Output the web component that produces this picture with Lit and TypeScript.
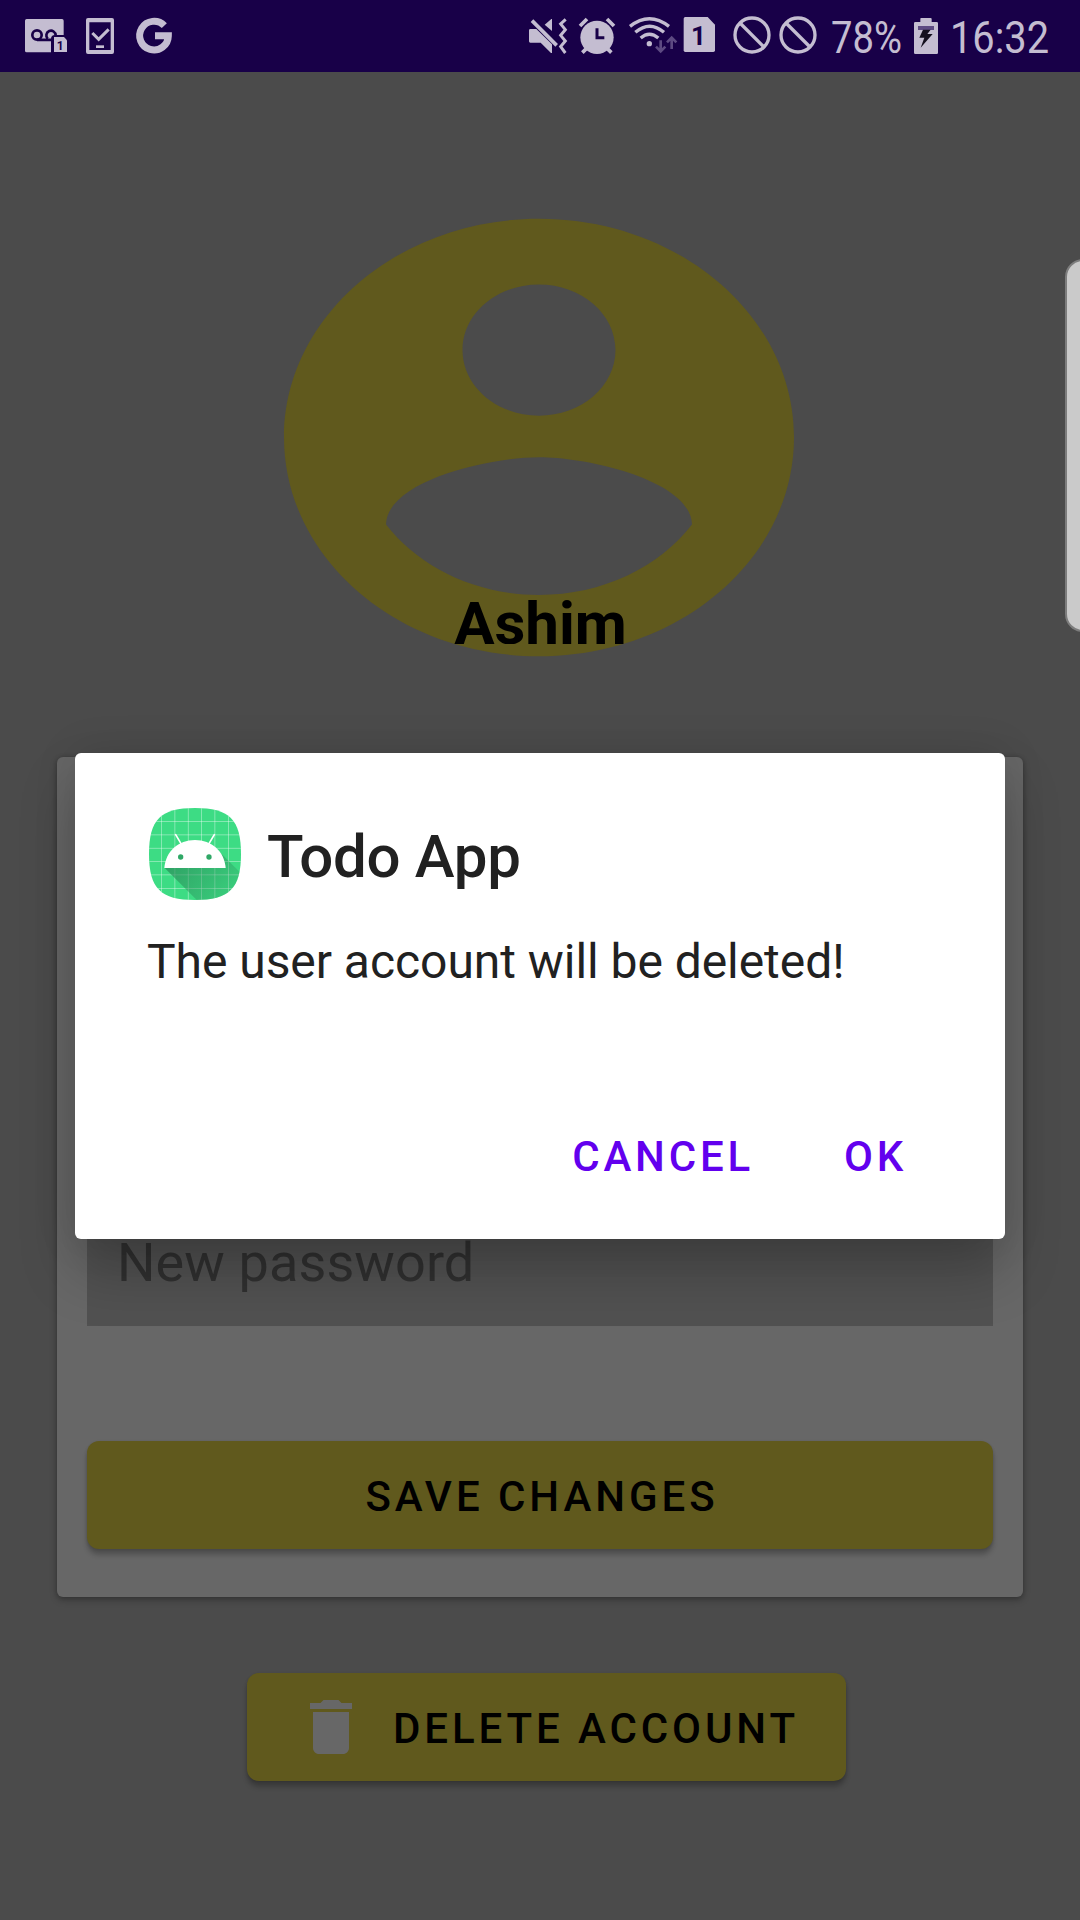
import { LitElement, html, css, svg } from "lit";
import { customElement } from "lit/decorators.js";

@customElement("status-bar")
class StatusBar extends LitElement {
  static styles = css`
    :host {
      display: flex;
      justify-content: space-between;
      height: 72px;
      padding: 0 30px 0 25px;
      background: #180048;
      color: #c4bdd1;
      font-family: Roboto, "Liberation Sans", sans-serif;
    }
    .group { display: flex; }
    svg { display: block; height: 72px; fill: currentColor; flex: none; overflow: visible; }
    .line { fill: none; stroke: currentColor; }
    .cut { fill: none; stroke: #180048; }
    .hole { fill: #180048; }
    .dim { fill: #5d4a82; }
    .dimline { fill: none; stroke: #5d4a82; stroke-width: 8; }
    .phone { margin-left: 18px; }
    .google { margin-left: 23px; }
    .alarm { margin-left: 12px; }
    .wifi { margin-left: 14px; }
    .sim { margin-left: 5px; }
    .ban { margin-left: 17px; }
    .ban2 { margin-left: 8px; }
    .percent { margin-left: 13px; }
    .battery { margin-left: 11px; }
    .time { margin-left: 13px; }
    .digit { font-weight: 700; }
  `;

  private ban(cx: number) {
    return svg`<circle class="line" cx=${cx} cy="105" r="51" stroke-width="10"/>
      <path class="line" stroke-width="10" d="M${cx - 36} 69l72 72"/>`;
  }

  render() {
    return html`
      <div class="group">
        <svg width="43" viewBox="75 0 129 216">
          <path d="M80 57h106q5 0 5 5v43h-26q-12 0-12 12v40H80q-5 0-5-5V62q0-5 5-5z"/>
          <g class="cut" stroke-width="8">
            <circle cx="111" cy="105" r="14"/>
            <path d="M143 116A14 14 0 1 1 167 106M111 119.500h43"/>
          </g>
          <path d="M162 111h30l9 10v35h-39z"/>
          <text class="hole digit" x="170" y="150" font-size="36">1</text>
        </svg>
        <svg class="phone" width="28" viewBox="258 0 84 216">
          <path fill-rule="evenodd" d="M264 54h72q6 0 6 6v96q0 6-6 6h-72q-6 0-6-6V60q0-6 6-6zM268 67v83h64V67z"/>
          <path class="line" stroke-width="9" d="M277 99l19 19 30-30"/>
          <path d="M288 136h24v8h-24z"/>
        </svg>
        <svg class="google" width="35" viewBox="408 0 105 216">
          <path class="line" stroke-width="21" d="M490 77A43 43 0 1 0 502 107.500H462"/>
        </svg>
      </div>
      <div class="group">
        <svg width="38" viewBox="57 0 114 216">
          <path d="M61 87h18l47 46v26h-3l-31-31H61q-4 0-4-4V91q0-4 4-4zM104 74l20-17h2v36z"/>
          <path class="cut" stroke-width="5" d="M72 57l76 75"/>
          <path class="line" stroke-width="11" d="M66 62l74 74"/>
          <path class="line" stroke-width="9" d="M167 58l-15 14 14 17-14 17 14 17-14 17 14 19"/>
        </svg>
        <svg class="alarm" width="36" viewBox="207 0 108 216">
          <circle cx="261" cy="112" r="50"/>
          <path class="line" stroke-width="11" d="M210 78l21-21M291 57l21 21M217 158l15-15M304 158l-15-15"/>
          <path class="cut" stroke-width="9" d="M261 85v28h22"/>
        </svg>
        <svg class="wifi" width="49" viewBox="357 0 147 216">
          <g class="line" stroke-width="10">
            <path d="M360 79q58-46 117 0"/>
            <path d="M376 97q43-37 86 0"/>
            <path d="M392 114q26-23 53 0"/>
          </g>
          <circle cx="418" cy="131" r="8"/>
          <path class="dimline" d="M452 121v30M438 140l14 14 14-14M485 147v-31M471 127l14-14 14 14"/>
        </svg>
        <svg class="sim" width="33" viewBox="519 0 99 216">
          <path d="M526 51h67l22 23v77q0 5-5 5h-84q-5 0-5-5V56q0-5 5-5z"/>
          <text class="hole digit" x="543" y="135" font-size="78">1</text>
        </svg>
        <svg class="ban" width="38" viewBox="669 0 114 216">${this.ban(726)}</svg>
        <svg class="ban2" width="39" viewBox="807 0 117 216">${this.ban(864)}</svg>
        <svg class="percent" width="72" viewBox="0 0 72 72">
          <text x="0" y="53" font-size="45" textLength="71" lengthAdjust="spacingAndGlyphs">78%</text>
        </svg>
        <svg class="battery" width="24" viewBox="342 0 72 216">
          <path d="M362 54h30q3 0 3 3v9h15q4 0 4 4v88q0 4-4 4h-64q-4 0-4-4V70q0-4 4-4h15v-9q0-3 2-3z"/>
          <path class="dim" d="M354 78h48v12h-48z"/>
          <path fill="#15101f" d="M369 89h23l-10 13h16l-36 41 11-30h-15z"/>
        </svg>
        <svg class="time" width="99" viewBox="0 0 99 72">
          <text x="-1" y="53" font-size="45" textLength="99" lengthAdjust="spacingAndGlyphs">16:32</text>
        </svg>
      </div>
    `;
  }
}

@customElement("confirm-dialog")
class ConfirmDialog extends LitElement {
  static styles = css`
    :host {
      display: flex;
      flex-direction: column;
      box-sizing: border-box;
      width: 930px;
      height: 486px;
      padding: 55px 72px 0;
      border-radius: 6px;
      background: #fff;
      color: #212121;
      box-shadow: 0 32px 56px rgba(0, 0, 0, 0.22), 0 0 44px rgba(0, 0, 0, 0.1);
      font-family: Roboto, "Liberation Sans", sans-serif;
    }
    .head { display: flex; height: 92px; padding-left: 2px; }
    .logo { width: 92px; height: 92px; flex: none; }
    .title {
      margin: 0 0 0 26px;
      font-size: 60px;
      font-weight: 500;
      line-height: 98px;
      letter-spacing: -0.3px;
      white-space: nowrap;
    }
    .message { margin: 30px 0 0; font-size: 48px; line-height: 64px; letter-spacing: -0.05px; white-space: nowrap; }
    .actions { display: flex; justify-content: flex-end; gap: 90px; margin-top: 131px; padding-right: 26px; }
    .action {
      padding: 0;
      border: 0;
      background: none;
      color: #6200ee;
      font: 500 42px/64px Roboto, "Liberation Sans", sans-serif;
      letter-spacing: 3.8px;
    }
  `;

  render() {
    return html`
      <div class="head">
        <svg class="logo" viewBox="57 54 276 276">
          <defs>
            <clipPath id="mask">
              <path d="M195 54C298 54 333 89 333 192S298 330 195 330 57 295 57 192 92 54 195 54z"/>
            </clipPath>
            <linearGradient id="shade" gradientUnits="userSpaceOnUse" x1="150" y1="190" x2="310" y2="330">
              <stop offset="0" stop-color="#2a8a58" stop-opacity=".7"/>
              <stop offset="1" stop-color="#2a8a58" stop-opacity=".15"/>
            </linearGradient>
          </defs>
          <g clip-path="url(#mask)">
            <path fill="#3ddc84" d="M57 54h276v276H57z"/>
            <path fill="none" stroke="#fff" stroke-opacity=".45" stroke-width="2.500"
              d="M94.500 54v276M134.500 54v276M175 54v276M214.500 54v276M254.500 54v276M295.500 54v276M57 94.500h276M57 134.500h276M57 175h276M57 214.500h276M57 254.500h276M57 295.500h276"/>
            <path fill="url(#shade)" d="M104 234L205 335H333V250L275 192z"/>
          </g>
          <path fill="#fff" d="M103 234C107 184 145 150 195 150S283 184 287 234z"/>
          <path fill="none" stroke="#fff" stroke-width="5" stroke-linecap="round" d="M137 134l16 27M253 134l-16 27"/>
          <circle cx="152" cy="201" r="8" fill="#2fa866"/>
          <circle cx="237" cy="201" r="8" fill="#2fa866"/>
        </svg>
        <h2 class="title">Todo App</h2>
      </div>
      <p class="message">The user account will be deleted!</p>
      <div class="actions">
        <button class="action">CANCEL</button>
        <button class="action">OK</button>
      </div>
    `;
  }
}

@customElement("app-root")
class AppRoot extends LitElement {
  static styles = css`
    :host {
      display: flex;
      flex-direction: column;
      position: relative;
      width: 1080px;
      height: 1920px;
      overflow: hidden;
      background: #4b4b4b;
      font-family: Roboto, "Liberation Sans", sans-serif;
    }
    .profile {
      display: grid;
      justify-items: center;
      width: 612px;
      height: 525px;
      margin: 103px 0 0 233px;
    }
    .avatar, .name { grid-area: 1 / 1; }
    .avatar { width: 612px; height: 525px; fill: #60591d; }
    .name {
      align-self: end;
      height: 54px;
      margin: 0 0 56px;
      padding-left: 3px;
      overflow: hidden;
      color: #000;
      font-size: 60px;
      font-weight: 700;
      line-height: 68px;
    }
    .card {
      display: flex;
      flex-direction: column;
      justify-content: flex-end;
      box-sizing: border-box;
      width: 966px;
      height: 840px;
      margin: 57px 0 0 57px;
      padding: 0 30px 48px;
      border-radius: 6px;
      background: #676767;
      box-shadow: 0 3px 7px rgba(0, 0, 0, 0.28), 0 0 4px rgba(0, 0, 0, 0.15);
    }
    .field {
      box-sizing: border-box;
      height: 168px;
      margin-bottom: 115px;
      padding: 72px 30px 0;
      background: #515151;
      color: #303030;
      font-size: 54px;
      line-height: 65px;
      letter-spacing: 0.1px;
    }
    .button {
      display: flex;
      align-items: center;
      box-sizing: border-box;
      flex: none;
      height: 108px;
      padding: 0 48px;
      border: 0;
      border-radius: 12px;
      background: #60591d;
      color: #000;
      font: 500 42px/50px Roboto, "Liberation Sans", sans-serif;
      letter-spacing: 3.9px;
      white-space: nowrap;
      box-shadow: 0 6px 5px rgba(0, 0, 0, 0.22), 0 1px 3px rgba(0, 0, 0, 0.15);
    }
    .label { padding-top: 3px; }
    .save { justify-content: center; padding-left: 52px; letter-spacing: 3.95px; }
    .delete { width: 599px; margin: 76px 0 0 247px; gap: 26px; }
    .trash { width: 72px; height: 72px; flex: none; fill: #676767; }
    .dialog { position: absolute; left: 75px; top: 753px; }
    .edge {
      position: absolute;
      left: 1065px;
      top: 259px;
      box-sizing: border-box;
      width: 36px;
      height: 373px;
      border: 2px solid #7d7d7d;
      border-radius: 19px;
      background: #cacaca;
    }
  `;

  render() {
    return html`
      <status-bar></status-bar>
      <section class="profile">
        <svg class="avatar" viewBox="0 0 24 24" preserveAspectRatio="none">
          <path d="M12 2C6.480 2 2 6.480 2 12s4.480 10 10 10 10-4.480 10-10S17.520 2 12 2zm0 3c1.660 0 3 1.340 3 3s-1.340 3-3 3-3-1.340-3-3 1.340-3 3-3zm0 14.200c-2.500 0-4.710-1.280-6-3.220.03-1.990 4-3.080 6-3.080 1.990 0 5.970 1.090 6 3.080-1.290 1.940-3.500 3.220-6 3.220z"/>
        </svg>
        <div class="name">Ashim</div>
      </section>
      <section class="card">
        <div class="field">New password</div>
        <button class="button save"><span class="label">SAVE CHANGES</span></button>
      </section>
      <button class="button delete">
        <svg class="trash" viewBox="0 0 24 24">
          <path d="M6 19c0 1.100.9 2 2 2h8c1.100 0 2-.9 2-2V7H6v12zM19 4h-3.500l-1-1h-5l-1 1H5v2h14V4z"/>
        </svg>
        <span class="label">DELETE ACCOUNT</span>
      </button>
      <div class="edge"></div>
      <confirm-dialog class="dialog"></confirm-dialog>
    `;
  }
}
